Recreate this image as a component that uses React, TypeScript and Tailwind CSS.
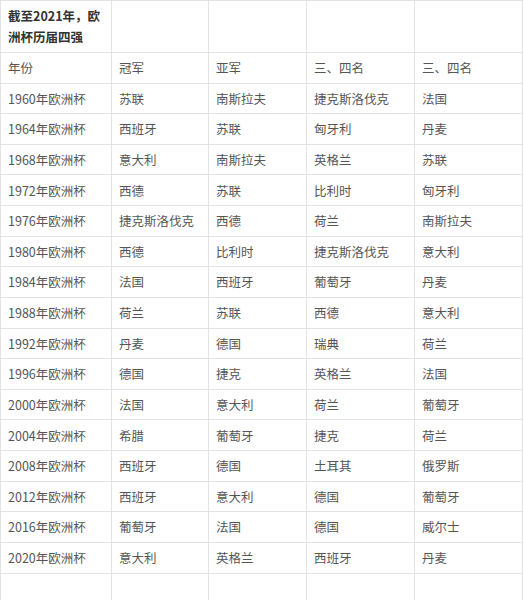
import React from 'react';

const rows: string[][] = [
  ['1960年欧洲杯', '苏联', '南斯拉夫', '捷克斯洛伐克', '法国'],
  ['1964年欧洲杯', '西班牙', '苏联', '匈牙利', '丹麦'],
  ['1968年欧洲杯', '意大利', '南斯拉夫', '英格兰', '苏联'],
  ['1972年欧洲杯', '西德', '苏联', '比利时', '匈牙利'],
  ['1976年欧洲杯', '捷克斯洛伐克', '西德', '荷兰', '南斯拉夫'],
  ['1980年欧洲杯', '西德', '比利时', '捷克斯洛伐克', '意大利'],
  ['1984年欧洲杯', '法国', '西班牙', '葡萄牙', '丹麦'],
  ['1988年欧洲杯', '荷兰', '苏联', '西德', '意大利'],
  ['1992年欧洲杯', '丹麦', '德国', '瑞典', '荷兰'],
  ['1996年欧洲杯', '德国', '捷克', '英格兰', '法国'],
  ['2000年欧洲杯', '法国', '意大利', '荷兰', '葡萄牙'],
  ['2004年欧洲杯', '希腊', '葡萄牙', '捷克', '荷兰'],
  ['2008年欧洲杯', '西班牙', '德国', '土耳其', '俄罗斯'],
  ['2012年欧洲杯', '西班牙', '意大利', '德国', '葡萄牙'],
  ['2016年欧洲杯', '葡萄牙', '法国', '德国', '威尔士'],
  ['2020年欧洲杯', '意大利', '英格兰', '西班牙', '丹麦'],
];

const cell = 'border border-[#e3e3e3] px-[7px] py-[4.15px] align-middle text-left';

export default function App() {
  return (
    <div className="min-h-screen bg-white" style={{ fontFamily: '"Noto Sans CJK SC", "Noto Sans", sans-serif' }}>
      <table className="w-[522px] table-fixed border-collapse text-[12.5px] leading-[21.35px] text-[#555]">
        <colgroup>
          <col className="w-[111px]" />
          <col className="w-[97px]" />
          <col className="w-[98px]" />
          <col className="w-[108px]" />
          <col className="w-[108px]" />
        </colgroup>
        <tbody>
          <tr>
            <td className={`${cell} font-bold text-[#333]`}>截至2021年，欧洲杯历届四强</td>
            <td className={cell}></td>
            <td className={cell}></td>
            <td className={cell}></td>
            <td className={cell}></td>
          </tr>
          <tr>
            <td className={cell}>年份</td>
            <td className={cell}>冠军</td>
            <td className={cell}>亚军</td>
            <td className={cell}>三、四名</td>
            <td className={cell}>三、四名</td>
          </tr>
          {rows.map((r) => (
            <tr key={r[0]}>
              {r.map((c, i) => (
                <td key={i} className={cell}>{c}</td>
              ))}
            </tr>
          ))}
          <tr>
            {[0, 1, 2, 3, 4].map((i) => (
              <td key={i} className={`${cell} h-[31px]`}></td>
            ))}
          </tr>
        </tbody>
      </table>
    </div>
  );
}
